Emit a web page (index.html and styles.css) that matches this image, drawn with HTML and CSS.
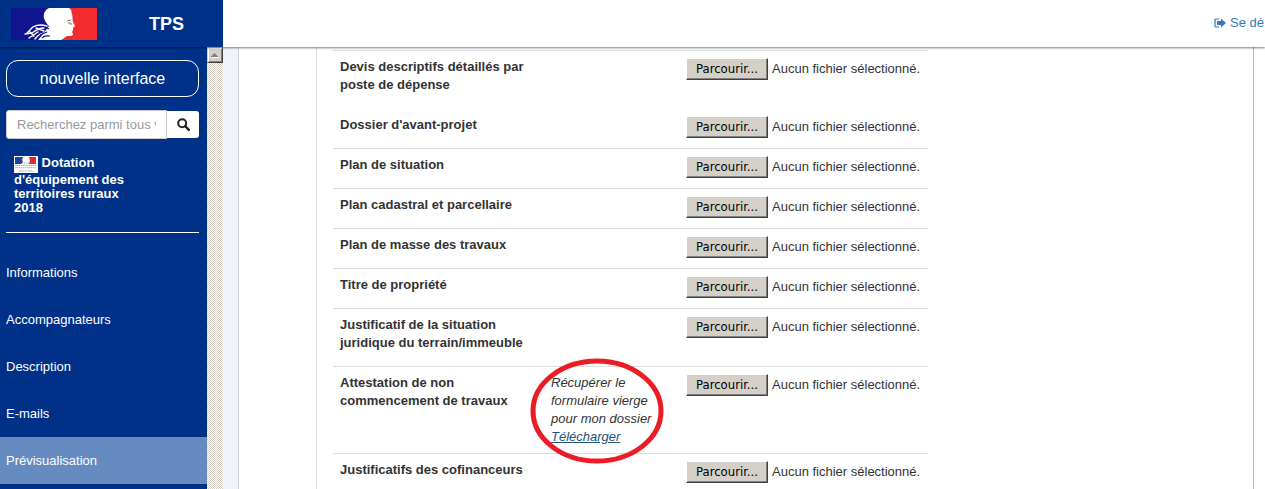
FILE: index.html
```html
<!DOCTYPE html>
<html lang="fr">
<head>
<meta charset="utf-8">
<meta name="viewport" content="width=device-width, initial-scale=1">
<title>TPS</title>
<link rel="stylesheet" href="styles.css">
</head>
<body>
<header class="topbar">
  <div class="brand">
    <svg class="brand-logo" viewBox="0 0 86 32" aria-hidden="true">
      <path fill="#10158f" d="M0 0h45v32H0z"/>
      <path fill="#f12b2e" d="M45 0h41v32H45z"/>
      <path fill="#fff" d="M38 0C34 2 32 6 33 10 34 14 36 16 38 18L32 26 27 32H50C53 31 54 28 57 28 60 28 62 28 62 26L61 24 62 22 62 20 64 18 62 14C61 11 62 9 61 6 60 3 61 2 59 1L58 0z"/>
      <path fill="none" stroke="#fff" stroke-width="1.4" stroke-linecap="round" d="M36 18C29 16 22 17 19 22L16 25M33 20C27 20 24 23 21 25L14 26M27 24 18 30M36 25C30 24 27 27 24 31M25 20 33 23M19 24 23 28"/>
      <path fill="none" stroke="#10158f" stroke-width="1.2" d="M34 19 38 21M29 27 36 24M31 30C33 27 36 28 39 28"/>
      <path fill="none" stroke="#777" stroke-width="1" d="m56 13 4-1M57 15h3v2"/>
    </svg>
    <strong class="brand-name">TPS</strong>
  </div>
  <a class="logout" href="#">
    <svg class="logout-icon" viewBox="0 0 12 10" aria-hidden="true">
      <path fill="none" stroke="currentColor" stroke-width="1.2" d="M5 1H2Q1 1 1 2v6q0 1 1 1h3"/>
      <path fill="currentColor" d="M3 3h4V.5L12 5 7 9.5V7H3z"/>
    </svg>
    Se dé</a>
</header>
<div class="layout">
  <aside class="sidebar">
    <a class="new-ui" href="#">nouvelle interface</a>
    <form class="search">
      <input class="search-input" type="text" aria-label="Recherche" placeholder="Recherchez parmi tous vos dossiers">
      <button class="search-button" type="button" aria-label="Rechercher">
        <svg class="search-icon" viewBox="0 0 13 13" aria-hidden="true"><circle cx="5.2" cy="5.2" r="4" fill="none" stroke="#222" stroke-width="2"/><path d="m8.2 8.2 3.6 3.6" stroke="#222" stroke-width="2.4" stroke-linecap="round"/></svg>
      </button>
    </form>
    <h1 class="procedure">
      <svg class="procedure-logo" viewBox="0 0 24 17" aria-hidden="true"><path fill="#fff" d="M0 0h24v17H0z"/><path fill="#20409a" d="M1 1h8L8 4l1 2-2 2H1z"/><path fill="#e32532" d="M15 1h7v7h-7l1-3z"/><path stroke="#999" stroke-width=".8" d="M8 7h7M1 9.5h21M1 11.7h21M5 15h14" stroke-dasharray="1.5 .5"/></svg>
      Dotation d'équipement des territoires ruraux 2018</h1>
    <nav class="menu">
      <a class="menu-item" href="#">Informations</a>
      <a class="menu-item" href="#">Accompagnateurs</a>
      <a class="menu-item" href="#">Description</a>
      <a class="menu-item" href="#">E-mails</a>
      <a class="menu-item active" href="#" aria-current="page">Prévisualisation</a>
    </nav>
  </aside>
  <div class="scrollbar">
    <button class="scroll-up" type="button" aria-label="Défiler vers le haut">
      <svg class="scroll-arrow" viewBox="0 0 8 5" aria-hidden="true"><path fill="#fff" d="M1 4h7v1H1z"/><path fill="#808080" d="M3 0h1v1h1v1h1v1h1v1H0V3h1V2h1V1h1z"/></svg>
    </button>
  </div>
  <main class="content">
    <div class="panel">
      <table class="files">
        <colgroup><col class="col-label"><col class="col-hint"><col></colgroup>
        <tbody>
          <tr><th scope="row">Devis descriptifs détaillés par poste de dépense</th><td></td><td><div class="picker"><button class="browse" type="button">Parcourir...</button><span>Aucun fichier sélectionné.</span></div></td></tr>
          <tr class="plain"><th scope="row">Dossier d'avant-projet</th><td></td><td><div class="picker"><button class="browse" type="button">Parcourir...</button><span>Aucun fichier sélectionné.</span></div></td></tr>
          <tr><th scope="row">Plan de situation</th><td></td><td><div class="picker"><button class="browse" type="button">Parcourir...</button><span>Aucun fichier sélectionné.</span></div></td></tr>
          <tr><th scope="row">Plan cadastral et parcellaire</th><td></td><td><div class="picker"><button class="browse" type="button">Parcourir...</button><span>Aucun fichier sélectionné.</span></div></td></tr>
          <tr><th scope="row">Plan de masse des travaux</th><td></td><td><div class="picker"><button class="browse" type="button">Parcourir...</button><span>Aucun fichier sélectionné.</span></div></td></tr>
          <tr><th scope="row">Titre de propriété</th><td></td><td><div class="picker"><button class="browse" type="button">Parcourir...</button><span>Aucun fichier sélectionné.</span></div></td></tr>
          <tr><th scope="row">Justificatif de la situation juridique du terrain/immeuble</th><td></td><td><div class="picker"><button class="browse" type="button">Parcourir...</button><span>Aucun fichier sélectionné.</span></div></td></tr>
          <tr><th scope="row">Attestation de non commencement de travaux</th>
            <td class="hint">Récupérer le formulaire vierge pour mon dossier <a href="#">Télécharger</a>
              <svg class="ring" viewBox="0 0 134 106" aria-hidden="true"><ellipse cx="67" cy="53" rx="64" ry="50" fill="none" stroke="#ed1c24" stroke-width="5"/></svg></td>
            <td><div class="picker"><button class="browse" type="button">Parcourir...</button><span>Aucun fichier sélectionné.</span></div></td></tr>
          <tr><th scope="row">Justificatifs des cofinanceurs</th><td></td><td><div class="picker"><button class="browse" type="button">Parcourir...</button><span>Aucun fichier sélectionné.</span></div></td></tr>
        </tbody>
      </table>
    </div>
  </main>
</div>
</body>
</html>
```
FILE: styles.css
```css
* { box-sizing: border-box; }
body {
  margin: 0;
  height: 100vh;
  display: flex;
  flex-direction: column;
  overflow: hidden;
  background: #fff;
  color: #333;
  font: 13px/18px "Liberation Sans", Arial, sans-serif;
}
.topbar {
  position: relative;
  z-index: 1;
  flex: none;
  height: 47px;
  display: flex;
  align-items: center;
  justify-content: space-between;
  background: #fff;
  box-shadow: 0 1px 2px rgba(0, 0, 0, .5);
}
.brand {
  width: 223px;
  height: 47px;
  padding-left: 11px;
  display: flex;
  align-items: center;
  gap: 52px;
  background: #003189;
  color: #fff;
}
.brand-logo { width: 86px; height: 32px; }
.brand-name { font-size: 18px; }
.logout {
  display: flex;
  align-items: center;
  gap: 4px;
  padding: 0 1px 2px 0;
  white-space: nowrap;
  color: #337ab7;
  text-decoration: none;
}
.logout-icon { width: 12px; height: 10px; }
.layout { flex: 1; min-height: 0; display: flex; }
.sidebar {
  flex: none;
  width: 207px;
  padding-top: 13px;
  background: #003189;
  color: #fff;
  overflow: hidden;
}
.new-ui {
  display: block;
  margin: 0 8px 13px 6px;
  padding: 8px 0;
  border: 1px solid #fff;
  border-radius: 12px;
  color: #fff;
  font-size: 16px;
  line-height: 19px;
  text-align: center;
  text-decoration: none;
}
.search { display: flex; align-items: center; margin: 0 8px 0 6px; }
.search-input {
  flex: 1;
  min-width: 0;
  height: 29px;
  padding: 0 10px;
  border: 1px solid #ccc;
  border-radius: 3px 0 0 3px;
  background: #fff;
  font: inherit;
}
.search-input::placeholder { color: #999; }
.search-button {
  width: 32px;
  height: 27px;
  padding: 0;
  display: flex;
  align-items: center;
  justify-content: center;
  border: 0;
  border-radius: 0 3px 3px 0;
  background: #fff;
}
.search-icon { width: 13px; height: 13px; }
.procedure {
  margin: 0 8px 16px 6px;
  padding: 17px 60px 17px 8px;
  border-bottom: 1px solid #fff;
  font-size: 13px;
  line-height: 14px;
}
.procedure-logo { width: 24px; height: 17px; vertical-align: -6px; }
.menu-item {
  display: block;
  padding: 15px 6px 14px;
  color: #fff;
  text-decoration: none;
}
.menu-item.active { background: #668bc0; }
.scrollbar {
  flex: none;
  width: 16px;
  background: repeating-conic-gradient(#fff 0 25%, #d4d0c8 0 50%) 0 0 / 2px 2px;
}
.scroll-up {
  display: flex;
  align-items: center;
  justify-content: center;
  width: 16px;
  height: 16px;
  padding: 0;
  border: 1px solid;
  border-color: #d4d0c8 #404040 #404040 #d4d0c8;
  background: #d4d0c8;
  box-shadow: inset 1px 1px #fff, inset -1px -1px #808080;
}
.scroll-arrow { width: 8px; height: 5px; }
.content {
  flex: 1;
  min-width: 0;
  display: flex;
  padding: 0 11px 0 15px;
  background: linear-gradient(90deg, #f0f4fa 15px, #fff 15px);
}
.panel {
  flex: 1;
  min-width: 0;
  padding: 3px 16px 0 94px;
  border-left: 1px solid #ced4da;
  border-right: 1px solid #bbb;
  background: linear-gradient(#ddd, #ddd) 77px 0 / 1px 100% no-repeat;
}
.files {
  width: 100%;
  max-width: 595px;
  table-layout: fixed;
  border-collapse: separate;
  border-spacing: 0;
}
.col-label { width: 211px; }
.col-hint { width: 135px; }
.files th, .files td {
  padding: 7px;
  border-top: 1px solid #ddd;
  vertical-align: top;
  text-align: left;
}
.files th { padding-bottom: 14px; }
.files .plain th, .files .plain td { border-top-color: transparent; }
.files .hint { position: relative; padding-right: 24px; font-style: italic; }
.hint a { color: #23527c; }
.ring {
  position: absolute;
  left: -14px;
  top: -9px;
  width: 134px;
  height: 106px;
  pointer-events: none;
}
.picker { display: flex; align-items: center; gap: 4px; white-space: nowrap; }
.browse {
  flex: none;
  width: 82px;
  height: 22px;
  padding: 0;
  border: 1px solid;
  border-color: #fff #404040 #404040 #fff;
  background: #d4d0c8;
  box-shadow: inset -1px -1px #808080;
  color: #000;
  font: 13px/18px "DejaVu Sans Condensed", "DejaVu Sans", sans-serif;
}
```
